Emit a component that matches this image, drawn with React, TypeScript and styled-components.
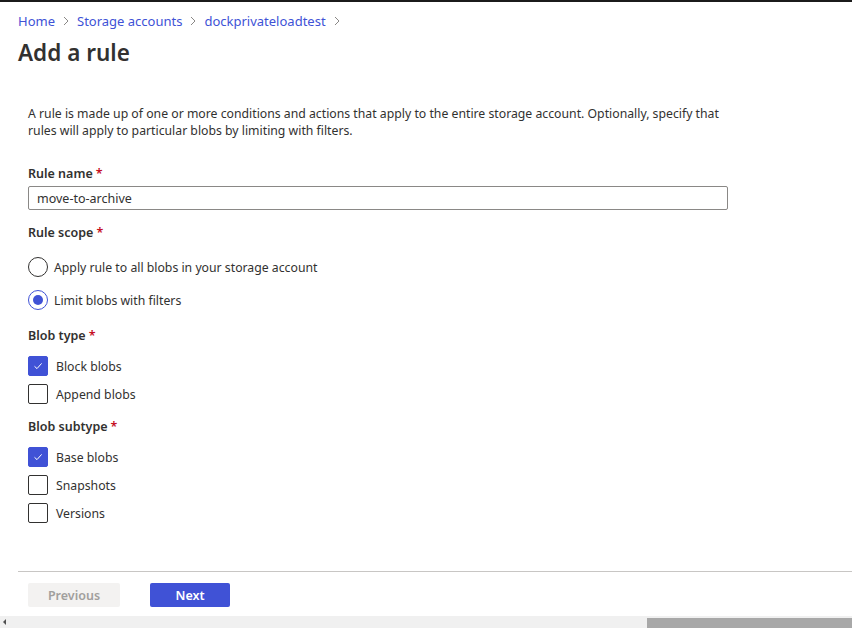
import React from "react";
import styled, { createGlobalStyle } from "styled-components";

const GlobalStyle = createGlobalStyle`
  html, body { margin: 0; padding: 0; background: #fff; }
  body { font-family: "Noto Sans", "Open Sans", sans-serif; color: #323130; }
  * { box-sizing: border-box; }
`;

const ACCENT = "#4052d6";

const Page = styled.div`
  width: 852px;
  height: 628px;
  display: flex;
  flex-direction: column;
  overflow: hidden;
  border-top: 2px solid #1b1b1b;
`;

const Main = styled.div`
  flex: 1;
  display: flex;
  flex-direction: column;
  padding-left: 18px;
`;

const Breadcrumb = styled.nav`
  display: flex;
  align-items: center;
  gap: 6px;
  height: 18px;
  margin-top: 10px;
  font-size: 13px;
`;

const Crumb = styled.a`
  color: ${ACCENT};
  text-decoration: none;
`;

const Chevron = styled.svg`
  width: 10px;
  height: 10px;
  color: #8a8886;
`;

const Title = styled.h1`
  margin: 8px 0 0;
  font-size: 22.5px;
  font-weight: 600;
  line-height: 30px;
  color: #323130;
`;

const Content = styled.div`
  padding-left: 10px;
  padding-top: 37px;
  display: flex;
  flex-direction: column;
`;

const Description = styled.p`
  margin: 0;
  font-size: 12.25px;
  line-height: 17px;
  width: 700px;
`;

const Label = styled.div<{ $top: number }>`
  margin-top: ${(p) => p.$top}px;
  font-size: 12.5px;
  font-weight: 600;
  line-height: 18px;
`;

const Req = styled.span`
  color: #c50f1f;
  margin-left: 3px;
`;

const TextInput = styled.input`
  margin-top: 3px;
  width: 700px;
  height: 24px;
  border: 1px solid #8a8886;
  border-radius: 2px;
  padding: 0 8px;
  font-family: inherit;
  font-size: 12.5px;
  color: #323130;
  outline: none;
`;

const OptionList = styled.div<{ $gap: number; $top: number }>`
  display: flex;
  flex-direction: column;
  gap: ${(p) => p.$gap}px;
  margin-top: ${(p) => p.$top}px;
`;

const Option = styled.label<{ $gap: number }>`
  display: flex;
  align-items: center;
  gap: ${(p) => p.$gap}px;
  height: 20px;
  font-size: 12.25px;
`;

const RadioCircle = styled.span<{ $checked: boolean }>`
  width: 20px;
  height: 20px;
  border-radius: 50%;
  border: 1px solid ${(p) => (p.$checked ? ACCENT : "#323130")};
  display: flex;
  align-items: center;
  justify-content: center;
  &::after {
    content: "";
    width: 10px;
    height: 10px;
    border-radius: 50%;
    background: ${(p) => (p.$checked ? ACCENT : "transparent")};
  }
`;

const Box = styled.span<{ $checked: boolean }>`
  width: 20px;
  height: 20px;
  border-radius: 2px;
  border: 1px solid ${(p) => (p.$checked ? ACCENT : "#323130")};
  background: ${(p) => (p.$checked ? ACCENT : "#fff")};
  display: flex;
  align-items: center;
  justify-content: center;
`;

const Footer = styled.div`
  margin-top: auto;
  border-top: 1px solid #c8c6c4;
  padding: 11px 0 9px 10px;
  display: flex;
  gap: 30px;
`;

const Button = styled.button<{ $primary?: boolean }>`
  width: ${(p) => (p.$primary ? 80 : 92)}px;
  height: 24px;
  border: none;
  border-radius: 2px;
  font-family: inherit;
  font-size: 12.5px;
  font-weight: 600;
  background: ${(p) => (p.$primary ? ACCENT : "#f3f2f1")};
  color: ${(p) => (p.$primary ? "#fff" : "#a19f9d")};
`;

const ScrollBar = styled.div`
  height: 12px;
  background: #f0f0f0;
  display: flex;
  align-items: center;
`;

const ScrollArrow = styled.span`
  margin-left: 3px;
  width: 0;
  height: 0;
  border-top: 3px solid transparent;
  border-bottom: 3px solid transparent;
  border-right: 3px solid #505050;
`;

const Thumb = styled.div`
  margin-left: auto;
  width: 205px;
  height: 10px;
  align-self: flex-end;
  background: #a8a8a8;
`;

const ChevronIcon = () => (
  <Chevron viewBox="0 0 10 10">
    <path d="M3 1 L7 5 L3 9" fill="none" stroke="currentColor" strokeWidth="1" />
  </Chevron>
);

const Check = () => (
  <svg width="12" height="12" viewBox="0 0 12 12">
    <path d="M2.5 6.3 L5 8.6 L9.6 3.4" fill="none" stroke="#fff" strokeWidth="1" />
  </svg>
);

const Radio = ({ checked, label }: { checked: boolean; label: string }) => (
  <Option $gap={6}>
    <RadioCircle $checked={checked} />
    {label}
  </Option>
);

const CheckBox = ({ checked, label }: { checked: boolean; label: string }) => (
  <Option $gap={8}>
    <Box $checked={checked}>{checked && <Check />}</Box>
    {label}
  </Option>
);

export default function App() {
  return (
    <>
      <GlobalStyle />
      <Page>
        <Main>
          <Breadcrumb>
            <Crumb>Home</Crumb>
            <ChevronIcon />
            <Crumb>Storage accounts</Crumb>
            <ChevronIcon />
            <Crumb>dockprivateloadtest</Crumb>
            <ChevronIcon />
          </Breadcrumb>
          <Title>Add a rule</Title>
          <Content>
            <Description>
              A rule is made up of one or more conditions and actions that apply to the entire
              storage account. Optionally, specify that rules will apply to particular blobs by
              limiting with filters.
            </Description>
            <Label $top={26}>
              Rule name<Req>*</Req>
            </Label>
            <TextInput defaultValue="move-to-archive" />
            <Label $top={14}>
              Rule scope<Req>*</Req>
            </Label>
            <OptionList $gap={13} $top={15}>
              <Radio checked={false} label="Apply rule to all blobs in your storage account" />
              <Radio checked label="Limit blobs with filters" />
            </OptionList>
            <Label $top={17}>
              Blob type<Req>*</Req>
            </Label>
            <OptionList $gap={8} $top={11}>
              <CheckBox checked label="Block blobs" />
              <CheckBox checked={false} label="Append blobs" />
            </OptionList>
            <Label $top={14}>
              Blob subtype<Req>*</Req>
            </Label>
            <OptionList $gap={8} $top={11}>
              <CheckBox checked label="Base blobs" />
              <CheckBox checked={false} label="Snapshots" />
              <CheckBox checked={false} label="Versions" />
            </OptionList>
          </Content>
          <Footer>
            <Button disabled>Previous</Button>
            <Button $primary>Next</Button>
          </Footer>
        </Main>
        <ScrollBar>
          <ScrollArrow />
          <Thumb />
        </ScrollBar>
      </Page>
    </>
  );
}
